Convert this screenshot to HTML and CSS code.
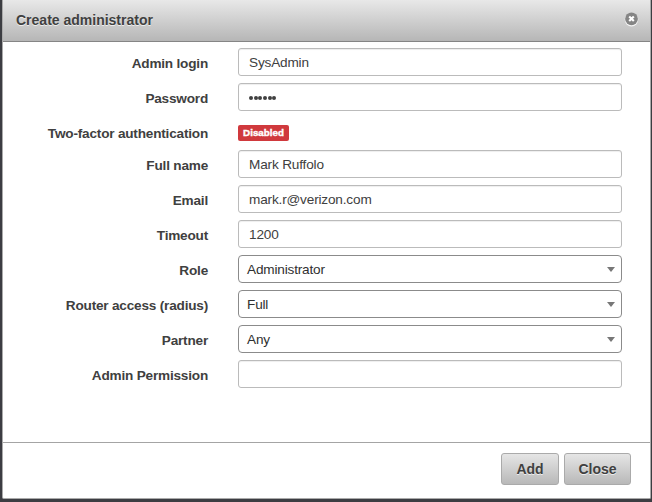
FILE: index.html
```html
<!DOCTYPE html>
<html lang="en">
<head>
<meta charset="utf-8">
<title>Create administrator</title>
<link rel="stylesheet" href="styles.css">
</head>
<body>
<section class="dialog">
  <header class="titlebar">
    <h1>Create administrator</h1>
    <svg class="close" viewBox="0 0 15 16" aria-label="Close">
      <circle cx="7.5" cy="8.6" r="6.8" fill="#f4f4f4"/>
      <circle cx="7.5" cy="7.8" r="6.4" fill="#858585"/>
      <path d="M5.2 5.5l4.6 4.6M9.8 5.5l-4.6 4.6" stroke="#fff" stroke-width="2.1"/>
    </svg>
  </header>
  <form class="body">
    <div class="row"><label>Admin login</label><div class="field">SysAdmin</div></div>
    <div class="row"><label>Password</label><div class="field dots"><i></i><i></i><i></i><i></i><i></i><i></i></div></div>
    <div class="row status"><label>Two-factor authentication</label><span class="badge">Disabled</span></div>
    <div class="row"><label>Full name</label><div class="field">Mark Ruffolo</div></div>
    <div class="row"><label>Email</label><div class="field">mark.r@verizon.com</div></div>
    <div class="row"><label>Timeout</label><div class="field">1200</div></div>
    <div class="row"><label>Role</label><div class="field select">Administrator</div></div>
    <div class="row"><label>Router access (radius)</label><div class="field select">Full</div></div>
    <div class="row"><label>Partner</label><div class="field select">Any</div></div>
    <div class="row"><label>Admin Permission</label><div class="field"></div></div>
  </form>
  <footer class="actions">
    <button class="add">Add</button>
    <button class="cancel">Close</button>
  </footer>
</section>
</body>
</html>
```
FILE: styles.css
```css
* { box-sizing: border-box; }
body {
  margin: 0;
  height: 502px;
  overflow: hidden;
  padding: 0 1px 3px 2px;
  background: #3c3d42;
  font: 13.6px/18px "Liberation Sans", Arial, sans-serif;
  color: #404040;
}
.dialog {
  height: 499px;
  display: flex;
  flex-direction: column;
  background: #fff;
  border: 1px solid #aaa;
  border-top: 0;
  border-radius: 0 0 2px 2px;
}
.titlebar {
  height: 42px;
  flex: none;
  display: flex;
  justify-content: space-between;
  padding: 0 11px 0 13px;
  background: linear-gradient(#e8e8e8, #b6b6b6);
  border-bottom: 1px solid #858585;
}
h1 {
  margin: 0;
  font-size: 14px;
  line-height: 40px;
  text-shadow: 0 1px 0 #eee;
}
.close { width: 15px; height: 16px; margin-top: 11px; }
.body {
  flex: 1;
  padding: 6px 28px 0 0;
}
.row {
  height: 35px;
  display: grid;
  grid-template-columns: 205px 384px;
  column-gap: 30px;
  align-items: start;
}
label {
  padding-top: 7px;
  text-align: right;
  font-weight: bold;
  letter-spacing: -.2px;
}
.field {
  height: 28px;
  padding: 0 10px;
  border: 1px solid #bbb;
  border-radius: 3px;
  line-height: 27px;
  letter-spacing: -.17px;
  box-shadow: inset 0 1px 1px #eee;
}
.select {
  display: flex;
  justify-content: space-between;
  padding: 0 6px 0 8px;
  border-color: #8b8b8b;
  border-radius: 4px;
  color: #303030;
  box-shadow: none;
}
.select::after {
  content: "";
  margin-top: 11px;
  width: 0;
  height: 0;
  border: 4px solid transparent;
  border-top: 5px solid #777;
  border-bottom: 0;
}
.dots { display: flex; gap: .67px; align-items: center; }
.dots i { width: 4px; height: 4px; margin-top: 1px; border-radius: 50%; background: #404040; }
.status { height: 32px; }
.badge {
  justify-self: start;
  width: 51px;
  height: 16px;
  margin-top: 7px;
  border-radius: 2px;
  background: #d0393d;
  color: #fff;
  font-size: 9.8px;
  font-weight: bold;
  line-height: 15px;
  text-align: center;
  -webkit-text-stroke: .4px #fff;
}
.actions {
  height: 56px;
  flex: none;
  display: flex;
  justify-content: flex-end;
  gap: 5px;
  padding: 10px 19px 0 0;
  border-top: 1px solid #a4a4a4;
}
button {
  height: 32px;
  padding: 0;
  border: 1px solid #aaa;
  border-radius: 3px;
  background: linear-gradient(#e5e5e5, #b8b8b8);
  color: #404040;
  font: bold 14px/30px "Liberation Sans", Arial, sans-serif;
  text-shadow: 0 1px 0 #eee;
}
.add { width: 58px; }
.cancel { width: 67px; }
```
